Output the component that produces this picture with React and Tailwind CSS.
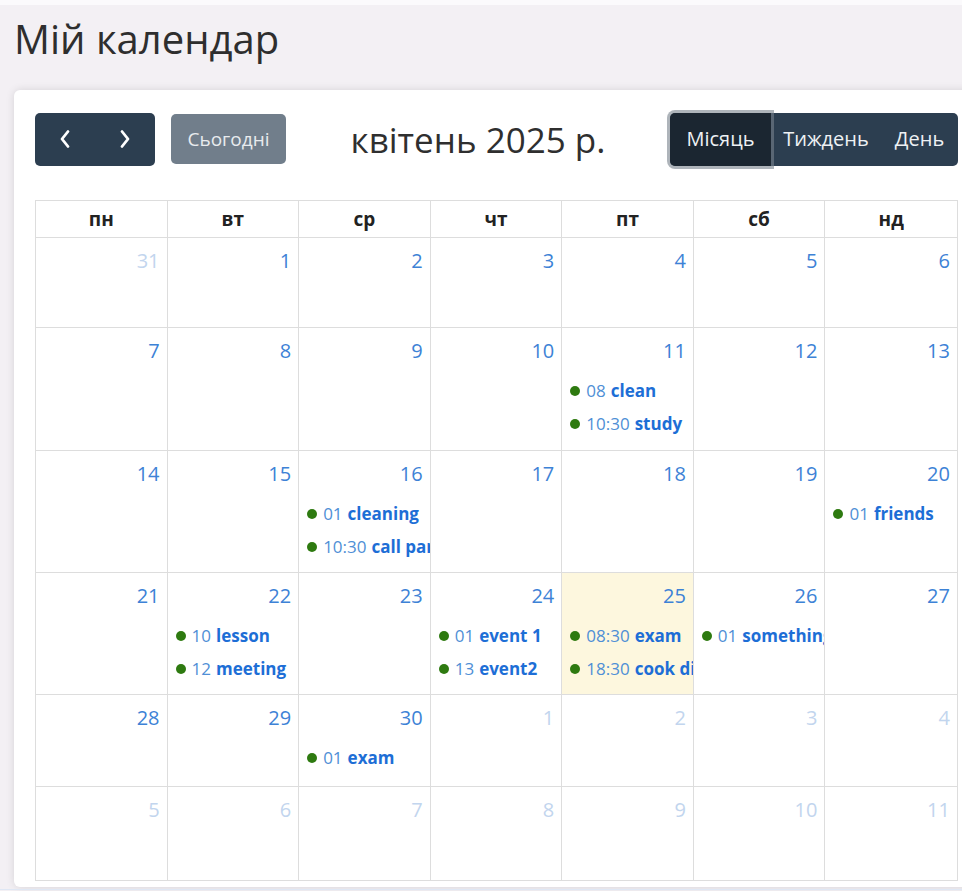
import React from "react";

const FONT = { fontFamily: '"Open Sans", "Noto Sans", sans-serif' };

const DAYS = ["пн", "вт", "ср", "чт", "пт", "сб", "нд"];

// April 2025, weeks starting on Monday, 31 Mar .. 11 May
const WEEKS = [
  { h: "h-[90px]", days: [[31, false], [1], [2], [3], [4], [5], [6]] },
  { h: "h-[123px]", days: [[7], [8], [9], [10], [11], [12], [13]] },
  { h: "h-[122px]", days: [[14], [15], [16], [17], [18], [19], [20]] },
  { h: "h-[122px]", days: [[21], [22], [23], [24], [25], [26], [27]] },
  { h: "h-[92px]", days: [[28], [29], [30], [1, false], [2, false], [3, false], [4, false]] },
  { h: "h-[93px]", days: [[5, false], [6, false], [7, false], [8, false], [9, false], [10, false], [11, false]] },
];

const EVENTS = {
  11: [["08", "clean"], ["10:30", "study"]],
  16: [["01", "cleaning"], ["10:30", "call parents"]],
  20: [["01", "friends"]],
  22: [["10", "lesson"], ["12", "meeting"]],
  24: [["01", "event 1"], ["13", "event2"]],
  25: [["08:30", "exam"], ["18:30", "cook dinner"]],
  26: [["01", "something"]],
  30: [["01", "exam"]],
};

const TODAY = 25;

function Chevron({ dir }) {
  return (
    <svg width="12" height="20" viewBox="0 0 12 20" fill="none">
      <path
        d={dir === "left" ? "M9 2.5 L3 10 L9 17.5" : "M3 2.5 L9 10 L3 17.5"}
        stroke="#ffffff"
        strokeWidth="2.8"
        strokeLinecap="round"
        strokeLinejoin="round"
      />
    </svg>
  );
}

function Event({ time, title }) {
  return (
    <div className="flex h-[33px] items-center overflow-hidden whitespace-nowrap pl-[8px] text-[17px]">
      <span className="mr-[6px] inline-block h-[10px] w-[10px] shrink-0 rounded-full bg-[#2e7a10]" />
      <span className="text-[#4f8fd6]">{time}</span>
      <span className="ml-[5px] font-bold text-[#1d6ed6]">{title}</span>
    </div>
  );
}

function DayCell({ num, current, last }) {
  const events = current ? EVENTS[num] || [] : [];
  const today = current && num === TODAY;
  return (
    <div
      className={`min-w-0 overflow-hidden border-[#dddddd] ${last ? "" : "border-r"} ${
        today ? "bg-[#fdf7de]" : ""
      }`}
    >
      <div
        className={`flex h-[46px] justify-end pr-[7px] pt-[8px] text-[20px] leading-[30px] ${
          current ? "text-[#3d82d6]" : "text-[#c2d5ee]"
        }`}
      >
        {num}
      </div>
      {events.map(([t, ti]) => (
        <Event key={t + ti} time={t} title={ti} />
      ))}
    </div>
  );
}

export default function App() {
  return (
    <div className="min-h-[891px] w-[962px] overflow-hidden bg-[#f3f0f4]" style={FONT}>
      <div className="h-[5px] bg-[#fbfafc]" />
      <div className="h-[85px] pl-[14px] pt-[14px]">
        <h1 className="text-[40px] leading-none text-[#2e2e2e]">Мій календар</h1>
      </div>

      <div className="ml-[14px] w-[965px] rounded-[6px] bg-white px-[21px] pb-[6px] pt-[22px] shadow-[0_0_8px_rgba(0,0,0,0.12)]">
        {/* toolbar */}
        <div className="flex h-[54px] items-center justify-between">
          <div className="flex items-center">
            <div className="flex h-[53px] overflow-hidden rounded-[5px] bg-[#2c3e50]">
              <button className="flex w-[60px] items-center justify-center">
                <Chevron dir="left" />
              </button>
              <button className="flex w-[60px] items-center justify-center">
                <Chevron dir="right" />
              </button>
            </div>
            <button className="ml-[16px] flex h-[50px] w-[115px] items-center justify-center rounded-[5px] bg-[#717e8b] text-[19px] text-[#e8ebee]">
              Сьогодні
            </button>
          </div>
          <h2 className="text-[35px] leading-none text-[#2f2f2f]">квітень 2025 р.</h2>
          <div className="flex h-[53px] rounded-[5px] bg-[#2c3e50] text-[20px] text-[#eef1f4]">
            <button className="relative z-10 flex w-[101px] items-center justify-center rounded-l-[5px] bg-[#1b2631] shadow-[0_0_0_3px_rgba(120,130,140,0.6)]">
              Місяць
            </button>
            <button className="flex w-[110px] items-center justify-center">Тиждень</button>
            <button className="flex w-[77px] items-center justify-center">День</button>
          </div>
        </div>

        {/* month grid */}
        <div className="mt-[34px] w-[923px] border border-[#dddddd]">
          <div className="grid h-[37px] grid-cols-7 border-b border-[#dddddd]">
            {DAYS.map((d, i) => (
              <div
                key={d}
                className={`flex items-center justify-center text-[19px] font-bold text-[#222222] ${
                  i < 6 ? "border-r border-[#dddddd]" : ""
                }`}
              >
                {d}
              </div>
            ))}
          </div>
          {WEEKS.map((w, wi) => (
            <div
              key={wi}
              className={`grid grid-cols-7 ${w.h} ${wi < WEEKS.length - 1 ? "border-b border-[#dddddd]" : ""}`}
            >
              {w.days.map(([n, cur], di) => (
                <DayCell key={di} num={n} current={cur !== false} last={di === 6} />
              ))}
            </div>
          ))}
        </div>
      </div>
      <div className="mt-[2px] h-[1px] bg-[#dfe7f4]" />
    </div>
  );
}
